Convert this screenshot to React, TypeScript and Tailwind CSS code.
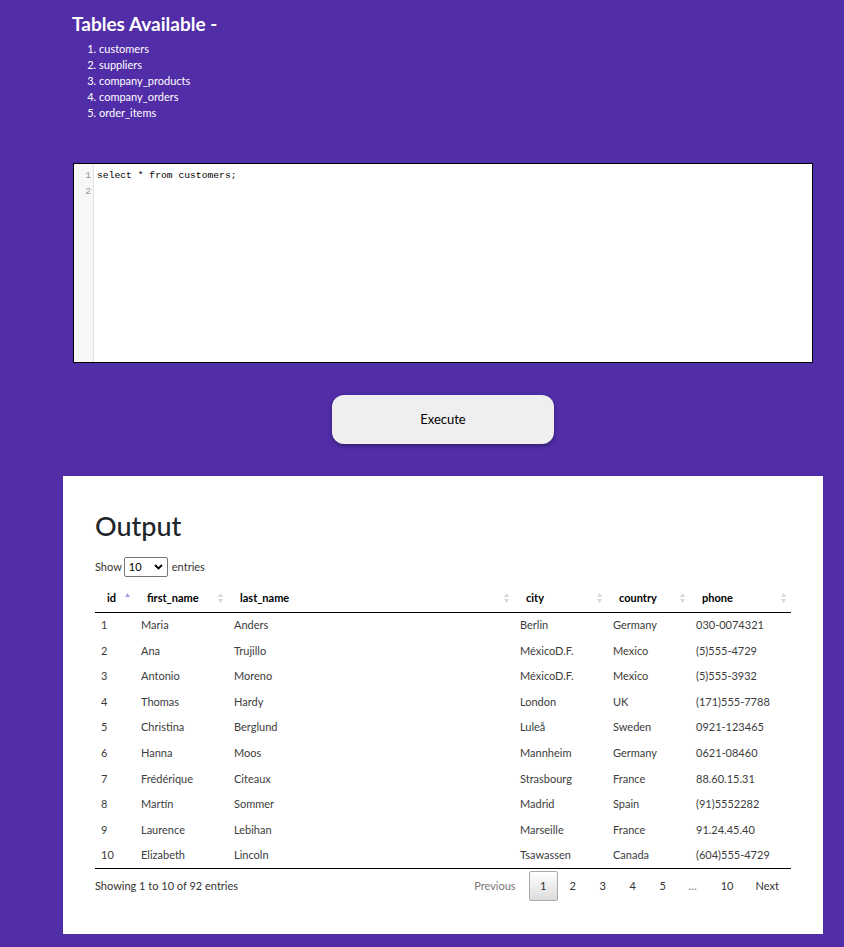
import React from 'react'

const tables = ['customers', 'suppliers', 'company_products', 'company_orders', 'order_items']

const columns = [
  { key: 'id', label: 'id', w: 'w-[40px]' },
  { key: 'first', label: 'first_name', w: 'w-[93px]' },
  { key: 'last', label: 'last_name', w: 'w-[286px]' },
  { key: 'city', label: 'city', w: 'w-[93px]' },
  { key: 'country', label: 'country', w: 'w-[83px]' },
  { key: 'phone', label: 'phone', w: 'w-[101px]' },
]

const rows = [
  ['1', 'Maria', 'Anders', 'Berlin', 'Germany', '030-0074321'],
  ['2', 'Ana', 'Trujillo', 'MéxicoD.F.', 'Mexico', '(5)555-4729'],
  ['3', 'Antonio', 'Moreno', 'MéxicoD.F.', 'Mexico', '(5)555-3932'],
  ['4', 'Thomas', 'Hardy', 'London', 'UK', '(171)555-7788'],
  ['5', 'Christina', 'Berglund', 'Luleå', 'Sweden', '0921-123465'],
  ['6', 'Hanna', 'Moos', 'Mannheim', 'Germany', '0621-08460'],
  ['7', 'Frédérique', 'Citeaux', 'Strasbourg', 'France', '88.60.15.31'],
  ['8', 'Martín', 'Sommer', 'Madrid', 'Spain', '(91)5552282'],
  ['9', 'Laurence', 'Lebihan', 'Marseille', 'France', '91.24.45.40'],
  ['10', 'Elizabeth', 'Lincoln', 'Tsawassen', 'Canada', '(604)555-4729'],
]

function SortIcon({ active }: { active?: boolean }) {
  return (
    <svg width="5" height="10" viewBox="0 0 5 10" className="absolute right-[5px] top-[7px]">
      <path d="M0 4 L2.5 0 L5 4 Z" fill={active ? '#a99be0' : '#d8d8d8'} />
      {!active && <path d="M0 6 L2.5 10 L5 6 Z" fill="#d8d8d8" />}
    </svg>
  )
}

export default function App() {
  return (
    <div className="min-h-[947px] bg-[#512da8] font-['Lato','Noto_Sans',sans-serif] pb-[13px]">
      <div className="pl-[72px] pt-[12px]">
        <h2 className="text-[19px] font-bold text-white leading-[24px]">Tables Available -</h2>
        <ol className="list-decimal pl-[27px] mt-[5px] text-[11px] leading-[16px] text-white">
          {tables.map((t) => (
            <li key={t}>{t}</li>
          ))}
        </ol>
      </div>

      <div className="ml-[73px] mt-[42px] w-[740px] h-[200px] border border-black bg-white flex">
        <div className="w-[20px] bg-[#f7f7f7] border-r border-[#e3e3e3] pt-[4px] pr-[2px] text-right font-['Liberation_Mono',monospace] text-[9.7px] leading-[16px] text-[#999]">
          <div>1</div>
          <div>2</div>
        </div>
        <div className="pl-[3px] pt-[4px] font-['Liberation_Mono',monospace] text-[9.7px] leading-[16px] text-black whitespace-pre">
          select * from customers;
        </div>
      </div>

      <div className="flex mt-[32px] pl-[332px]">
        <button className="w-[222px] h-[49px] rounded-[12px] bg-[#efefef] text-[13px] text-black shadow-[0_2px_4px_rgba(0,0,0,0.35)]">
          Execute
        </button>
      </div>

      <div className="ml-[63px] mt-[32px] w-[760px] h-[458px] bg-white px-[32px] pt-[32px] text-[#333]">
        <h1 className="text-[27px] font-medium text-[#212529] leading-[36px]">Output</h1>
        <div className="flex items-center mt-[13px] text-[11px] text-[#333]">
          <span>Show</span>
          <div className="ml-[2px] mr-[4px] w-[44px] h-[20px] border border-[#767676] rounded-[2px] flex items-center justify-between px-[4px] text-black">
            <span>10</span>
            <svg width="9" height="6" viewBox="0 0 9 6">
              <path d="M1 1 L4.5 4.5 L8 1" stroke="#000" strokeWidth="1.8" fill="none" />
            </svg>
          </div>
          <span>entries</span>
        </div>

        <table className="table-fixed w-[696px] mt-[9px] border-collapse text-[11px]">
          <colgroup>
            {columns.map((c) => (
              <col key={c.key} className={c.w} />
            ))}
          </colgroup>
          <thead>
            <tr className="h-[26px] border-b border-black">
              {columns.map((c, i) => (
                <th key={c.key} className="relative text-left font-bold text-black pl-[12px] pb-[2px] align-middle">
                  {c.label}
                  <SortIcon active={i === 0} />
                </th>
              ))}
            </tr>
          </thead>
          <tbody>
            {rows.map((r) => (
              <tr key={r[0]} className="h-[25.6px]">
                {r.map((v, i) => (
                  <td key={i} className="pl-[6px] pt-[1px] align-middle text-[#3c3c3c]">
                    {v}
                  </td>
                ))}
              </tr>
            ))}
          </tbody>
        </table>
        <div className="w-[696px] border-t border-black" />

        <div className="w-[696px] flex items-center justify-between text-[11px] mt-[2px]">
          <span className="text-[#333]">Showing 1 to 10 of 92 entries</span>
          <div className="flex items-center text-[#333]">
            <span className="px-[13px] text-[#777]">Previous</span>
            <span className="w-[29px] h-[30px] flex items-center justify-center border border-[#aaa] rounded-[2px] bg-gradient-to-b from-white to-[#dcdcdc]">1</span>
            <span className="w-[30px] text-center">2</span>
            <span className="w-[30px] text-center">3</span>
            <span className="w-[30px] text-center">4</span>
            <span className="w-[30px] text-center">5</span>
            <span className="w-[30px] text-center text-[#777]">…</span>
            <span className="w-[39px] text-center">10</span>
            <span className="pl-[9px] pr-[12px]">Next</span>
          </div>
        </div>
      </div>
    </div>
  )
}
